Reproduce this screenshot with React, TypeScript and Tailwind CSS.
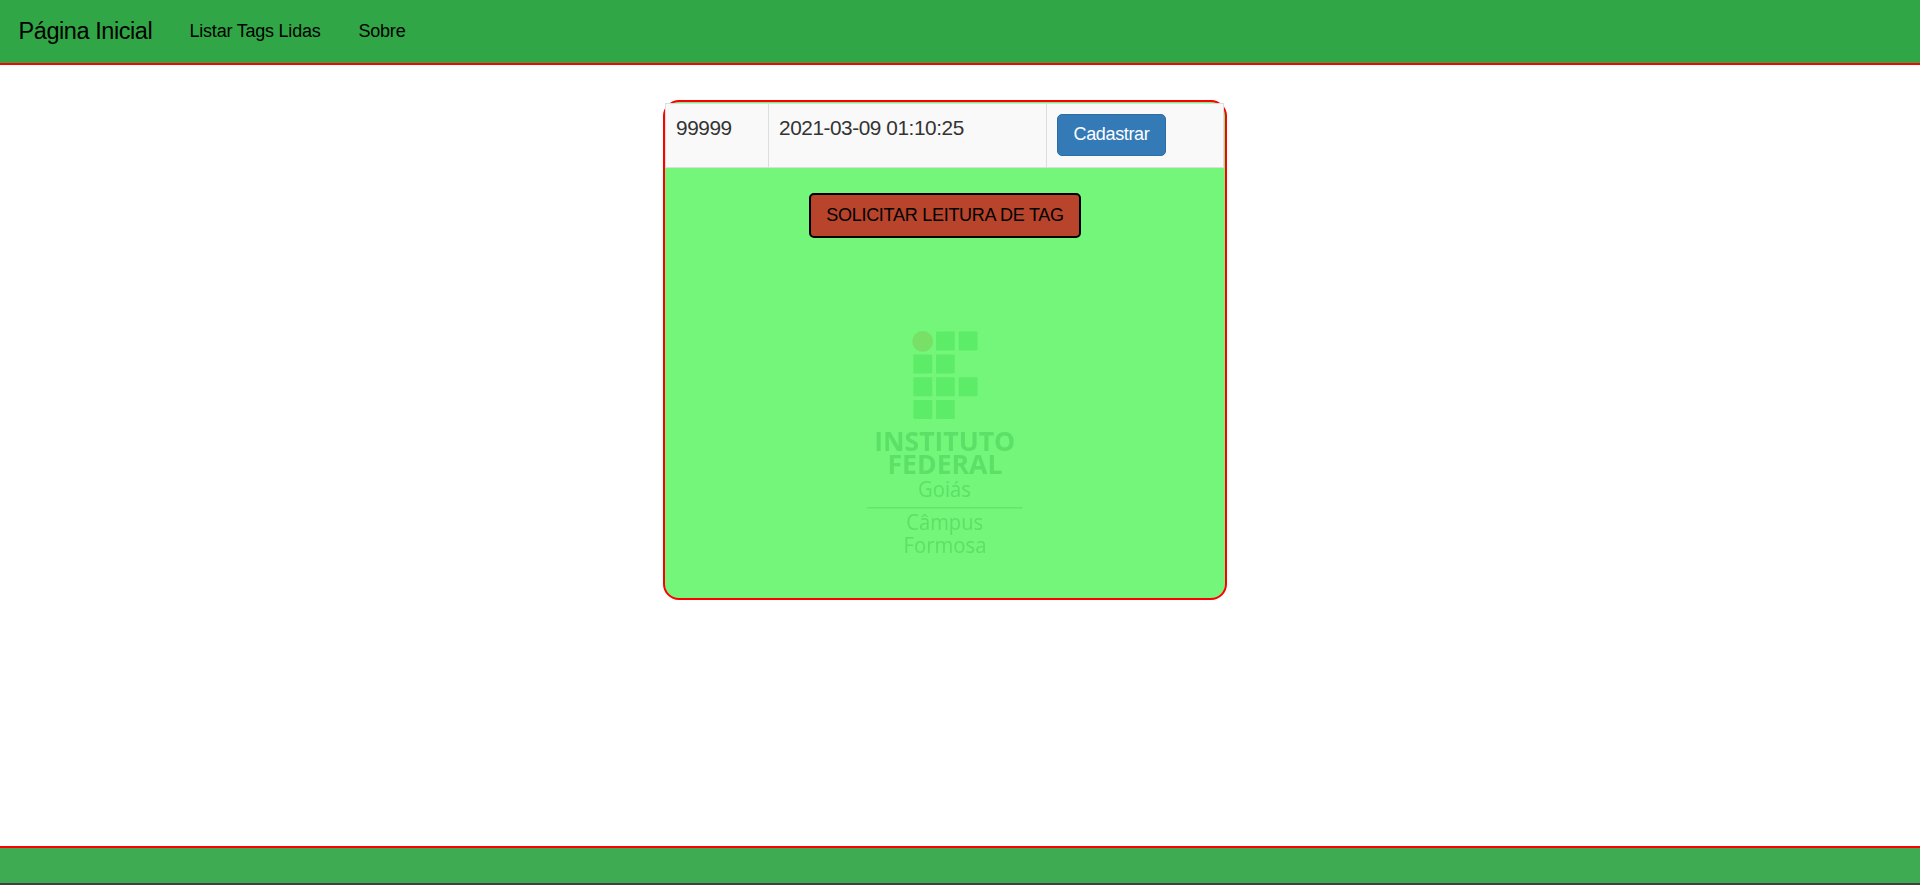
const tiles = [
  [96, 21.6], [118.7, 21.6],
  [73.4, 44.4], [96, 44.4],
  [73.4, 67.2], [96, 67.2], [118.7, 67.2],
  [73.4, 89.9], [96, 89.9],
];

function CampusLogo() {
  return (
    <svg viewBox="0 0 210 260" className="mt-[72px] block h-[260px] w-[210px] self-center font-['Open_Sans','Noto_Sans',sans-serif] blur-[0.4px]">
      <circle cx="82.7" cy="31.3" r="10.4" fill="#78e066" />
      {tiles.map(([x, y]) => (
        <rect key={`${x}-${y}`} x={x} y={y} width="18.8" height="19" rx="0.8" fill="#5dec67" />
      ))}
      <g fill="#5de067" textAnchor="middle">
        <g fontSize="26" fontWeight="700">
          <text x="104.7" y="140.8" textLength="141" lengthAdjust="spacingAndGlyphs">INSTITUTO</text>
          <text x="105" y="163.5" textLength="115" lengthAdjust="spacingAndGlyphs">FEDERAL</text>
        </g>
        <g fontSize="21.3">
          <text x="104.5" y="186.7" textLength="53" lengthAdjust="spacingAndGlyphs">Goiás</text>
          <text x="104.7" y="220" textLength="77" lengthAdjust="spacingAndGlyphs">Câmpus</text>
          <text x="105" y="243" textLength="83" lengthAdjust="spacingAndGlyphs">Formosa</text>
        </g>
      </g>
      <path d="M27 197.8H182.5" stroke="#62e76a" strokeWidth="1.5" />
    </svg>
  );
}

export default function App() {
  return (
    <div className="flex h-[885px] flex-col bg-white font-['Liberation_Sans',Arial,sans-serif] text-[18px] text-black">
      <nav className="flex h-[65px] items-center border-b-2 border-[#ff0000] bg-[#30a646] pl-[18.5px]">
        <a className="w-[134px] text-[23.5px] tracking-[-0.43px] whitespace-nowrap">Página Inicial</a>
        <a className="ml-[37px] w-[131px] tracking-[-0.22px] whitespace-nowrap">Listar Tags Lidas</a>
        <a className="ml-[38px] tracking-[-0.22px]">Sobre</a>
      </nav>
      <main className="flex-1 pt-[35px] pl-[663px]">
        <section className="flex h-[500px] w-[564px] flex-col rounded-[16px] border-2 border-[#ff0000] bg-[#73f679]">
          <div className="mt-px flex h-[65px] w-[559px] border border-[#dddddd] bg-[#f9f9f9] text-[20.8px] leading-[28px] tracking-[-0.44px] text-[#333333]">
            <div className="w-[103px] border-r border-[#dddddd] pt-[10px] pl-[10px]">99999</div>
            <div className="w-[278px] border-r border-[#dddddd] pt-[10px] pl-[10px]">2021-03-09 01:10:25</div>
            <div className="pt-[10px] pl-[10px]">
              <button className="block h-[42px] w-[109px] rounded-[5px] border border-[#2e6da4] bg-[#337ab7] pb-[2px] text-[18px] leading-[24px] tracking-[-0.35px] text-white">
                Cadastrar
              </button>
            </div>
          </div>
          <button className="mt-[25px] h-[45px] w-[272px] self-center rounded-[5px] border-2 border-black bg-[#b8442c] pb-px text-[18px] leading-[24px] tracking-[-0.27px] whitespace-nowrap">
            SOLICITAR LEITURA DE TAG
          </button>
          <CampusLogo />
        </section>
      </main>
      <footer className="h-[39px] border-t-2 border-b-2 border-t-[#ff0000] border-b-[#404040] bg-[#3eab53]" />
    </div>
  );
}
